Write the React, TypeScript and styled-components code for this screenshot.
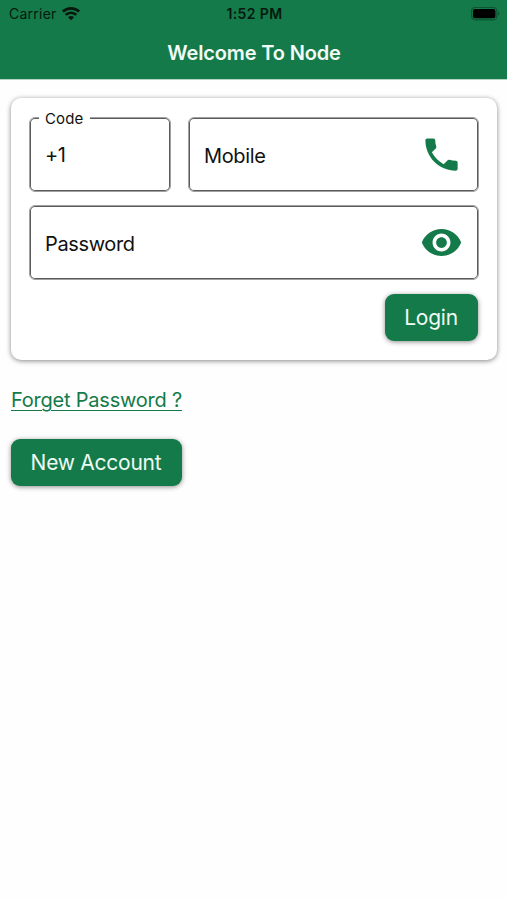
import React from "react";
import styled, { createGlobalStyle } from "styled-components";

const green = "#147a49";

const GlobalStyle = createGlobalStyle`
  *, *::before, *::after { box-sizing: border-box; }
  html, body { margin: 0; background: #fefefe; }
  body { font-family: Inter, "Liberation Sans", sans-serif; color: #111; }
`;

const Screen = styled.div`
  min-height: 900px;
  background: #fefefe;
`;

const Header = styled.header`
  height: 79px;
  background: ${green};
  box-shadow: 0 1px 0 #b5d5c4;
`;

const StatusBar = styled.div`
  display: grid;
  grid-template-columns: 1fr auto 1fr;
  align-items: center;
  height: 27px;
  padding: 0 7px 0 9px;
  color: #06180e;
  line-height: 18px;
`;

const Carrier = styled.div`
  display: flex;
  align-items: center;
  gap: 5px;
  font-size: 14px;
  letter-spacing: 0.25px;
`;

const Clock = styled.div`
  font-size: 14px;
  font-weight: 600;
  letter-spacing: 0.4px;
`;

const BatterySlot = styled.div`
  display: flex;
  justify-content: flex-end;
`;

const Title = styled.h1`
  margin: 0;
  padding: 13px 0 0 1px;
  text-align: center;
  color: #f2fbf5;
  font-size: 20px;
  line-height: 26px;
  font-weight: 600;
  letter-spacing: -0.14px;
`;

const Content = styled.main`
  display: flex;
  flex-direction: column;
  align-items: flex-start;
  padding: 19px 10px 0 11px;
`;

const Card = styled.section`
  display: flex;
  flex-direction: column;
  width: 100%;
  height: 262px;
  padding: 19px 18px 0 18px;
  background: #fff;
  border-radius: 10px;
  box-shadow: 0 1px 5px rgba(0, 0, 0, 0.48);
`;

const FieldRow = styled.div`
  display: grid;
  grid-template-columns: 142px 1fr;
  gap: 17px;
  margin-bottom: 13px;
`;

const Field = styled.label`
  position: relative;
  display: flex;
  align-items: center;
  justify-content: space-between;
  height: 75px;
  padding: 0 15px 0 15px;
  border: 1px solid #a0a0a2;
  border-radius: 6px;
  box-shadow: inset 0 0 0 1px #5c5c5e;
`;

const FieldText = styled.span<{ $raised?: boolean }>`
  padding-top: ${(p) => (p.$raised ? 0 : 2)}px;
  font-size: 20px;
  line-height: 26px;
  letter-spacing: -0.36px;
`;

const FloatingLabel = styled.span`
  position: absolute;
  top: -8px;
  left: 9px;
  padding: 0 7px 0 6px;
  background: #fff;
  font-size: 15px;
  line-height: 18px;
  letter-spacing: 0.1px;
`;

const FieldIcon = styled.svg`
  width: 43px;
  height: 43px;
  fill: ${green};
`;

const Button = styled.button<{ $width: number }>`
  width: ${(p) => p.$width}px;
  height: 47px;
  padding: 0 1px 0 0;
  border: 0;
  border-radius: 9px;
  background: ${green};
  color: #effaf3;
  font: 400 21px/28px Inter, "Liberation Sans", sans-serif;
  letter-spacing: -0.25px;
  box-shadow: 0 1px 5px rgba(0, 0, 0, 0.45);
`;

const Actions = styled.div`
  display: flex;
  justify-content: flex-end;
  margin: 14px 1px 0 0;
`;

const ForgotLink = styled.a`
  margin: 26px 0 25px;
  color: ${green};
  font-size: 20px;
  line-height: 28px;
  letter-spacing: -0.22px;
  text-decoration: underline;
  text-decoration-thickness: 1px;
  text-underline-offset: 3px;
`;

const WifiIcon = () => (
  <svg width="18" height="14" viewBox="0 0 18 14" fill="none" stroke="#06180e" strokeWidth="2.7">
    <path d="M.9 4.600C5.500.3 12.500.3 17.100 4.600" />
    <path d="M3.700 7.900c2.900-2.900 7.700-2.900 10.600 0" />
    <path d="M6 10.200c1.700-1.600 4.300-1.600 6 0L9 13.300z" fill="#06180e" stroke="none" />
  </svg>
);

const BatteryIcon = () => (
  <svg width="29" height="14" viewBox="0 0 29 14">
    <rect x="0.6" y="0.4" width="25.2" height="12.4" rx="3.6" fill="none" stroke="#0d5632" strokeWidth="1.2" />
    <rect x="2" y="2" width="22.4" height="9.2" rx="2" fill="#000" />
    <path d="M27 4.600v4c.8-.3 1.300-1.100 1.300-2S27.800 4.900 27 4.600z" fill="#0d5632" />
  </svg>
);

const PhoneIcon = () => (
  <FieldIcon viewBox="0 0 24 24">
    <path d="M6.620 10.790c1.440 2.830 3.760 5.140 6.590 6.590l2.200-2.200c.270-.270.670-.360 1.020-.240 1.120.370 2.330.570 3.570.570.550 0 1 .450 1 1V20c0 .550-.450 1-1 1-9.390 0-17-7.610-17-17 0-.550.450-1 1-1h3.500c.550 0 1 .450 1 1 0 1.250.200 2.450.570 3.570.110.350.030.740-.250 1.020l-2.200 2.200z" />
  </FieldIcon>
);

const EyeIcon = () => (
  <FieldIcon viewBox="0 0 24 24">
    <path d="M12 4.500C7 4.500 2.730 7.610 1 12c1.730 4.390 6 7.500 11 7.500s9.270-3.110 11-7.500c-1.730-4.390-6-7.500-11-7.500zM12 17c-2.760 0-5-2.240-5-5s2.240-5 5-5 5 2.240 5 5-2.240 5-5 5zm0-8c-1.660 0-3 1.340-3 3s1.340 3 3 3 3-1.340 3-3-1.340-3-3-3z" />
  </FieldIcon>
);

export default function App() {
  return (
    <Screen>
      <GlobalStyle />
      <Header>
        <StatusBar>
          <Carrier>
            Carrier
            <WifiIcon />
          </Carrier>
          <Clock>1:52 PM</Clock>
          <BatterySlot>
            <BatteryIcon />
          </BatterySlot>
        </StatusBar>
        <Title>Welcome To Node</Title>
      </Header>
      <Content>
        <Card>
          <FieldRow>
            <Field>
              <FloatingLabel>Code</FloatingLabel>
              <FieldText $raised>+1</FieldText>
            </Field>
            <Field>
              <FieldText>Mobile</FieldText>
              <PhoneIcon />
            </Field>
          </FieldRow>
          <Field>
            <FieldText>Password</FieldText>
            <EyeIcon />
          </Field>
          <Actions>
            <Button $width={93}>Login</Button>
          </Actions>
        </Card>
        <ForgotLink>Forget Password ?</ForgotLink>
        <Button $width={171}>New Account</Button>
      </Content>
    </Screen>
  );
}
